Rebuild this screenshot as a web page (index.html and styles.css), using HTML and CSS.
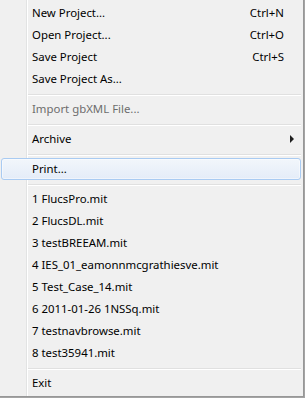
FILE: index.html
```html
<!DOCTYPE html>
<html>
<head>
<meta charset="utf-8">
<link rel="stylesheet" href="styles.css">
</head>
<body>
<div class="menu">
  <div class="item"><span class="label">New Project...</span><span class="key">Ctrl+N</span></div>
  <div class="item"><span class="label">Open Project...</span><span class="key">Ctrl+O</span></div>
  <div class="item"><span class="label">Save Project</span><span class="key">Ctrl+S</span></div>
  <div class="item"><span class="label">Save Project As...</span></div>
  <div class="sep"></div>
  <div class="item disabled"><span class="label">Import gbXML File...</span></div>
  <div class="sep"></div>
  <div class="item"><span class="label">Archive</span><span class="arrow"></span></div>
  <div class="sep"></div>
  <div class="item hot"><span class="label">Print...</span></div>
  <div class="sep"></div>
  <div class="item"><span class="label">1 FlucsPro.mit</span></div>
  <div class="item"><span class="label">2 FlucsDL.mit</span></div>
  <div class="item"><span class="label">3 testBREEAM.mit</span></div>
  <div class="item"><span class="label">4 IES_01_eamonnmcgrathiesve.mit</span></div>
  <div class="item"><span class="label">5 Test_Case_14.mit</span></div>
  <div class="item"><span class="label">6 2011-01-26 1NSSq.mit</span></div>
  <div class="item"><span class="label">7 testnavbrowse.mit</span></div>
  <div class="item"><span class="label">8 test35941.mit</span></div>
  <div class="sep"></div>
  <div class="item"><span class="label">Exit</span></div>
</div>
</body>
</html>
```

FILE: styles.css
```css
html, body {
  margin: 0;
  padding: 0;
  background: #a4a4a4;
}

.menu {
  width: 303px;
  padding: 2px 0 2px 0;
  background-color: #f0f0f0;
  background-image: linear-gradient(to right, transparent 26px, #e2e3e3 26px, #e2e3e3 27px, #ffffff 27px, #ffffff 28px, transparent 28px);
  border-right: 1px solid #979797;
  border-bottom: 1px solid #979797;
  font-family: "Noto Sans", "Open Sans", sans-serif;
  font-size: 11.4px;
  color: #000;
}

.item {
  display: flex;
  align-items: center;
  height: 22px;
  margin: 0 2px 0 1px;
  padding: 0 7px 0 31px;
  box-sizing: border-box;
  line-height: 22px;
  white-space: nowrap;
}

.label {
  flex: 1;
}

.key {
  margin-right: 10px;
}

.disabled {
  color: #6d6d6d;
}

.hot {
  padding-left: 30px;
  padding-right: 6px;
  border: 1px solid #a9cbf2;
  border-radius: 3px;
  background: linear-gradient(to bottom, #f2f6fb, #e4ecf8);
  box-shadow: inset 0 0 0 1px rgba(255, 255, 255, 0.45);
}

.arrow {
  width: 0;
  height: 0;
  border-top: 4px solid transparent;
  border-bottom: 4px solid transparent;
  border-left: 4px solid #1e1e1e;
}

.sep {
  margin: 4px 2px 2px 28px;
  border-top: 1px solid #e0e0e0;
  border-bottom: 1px solid #ffffff;
}
```
